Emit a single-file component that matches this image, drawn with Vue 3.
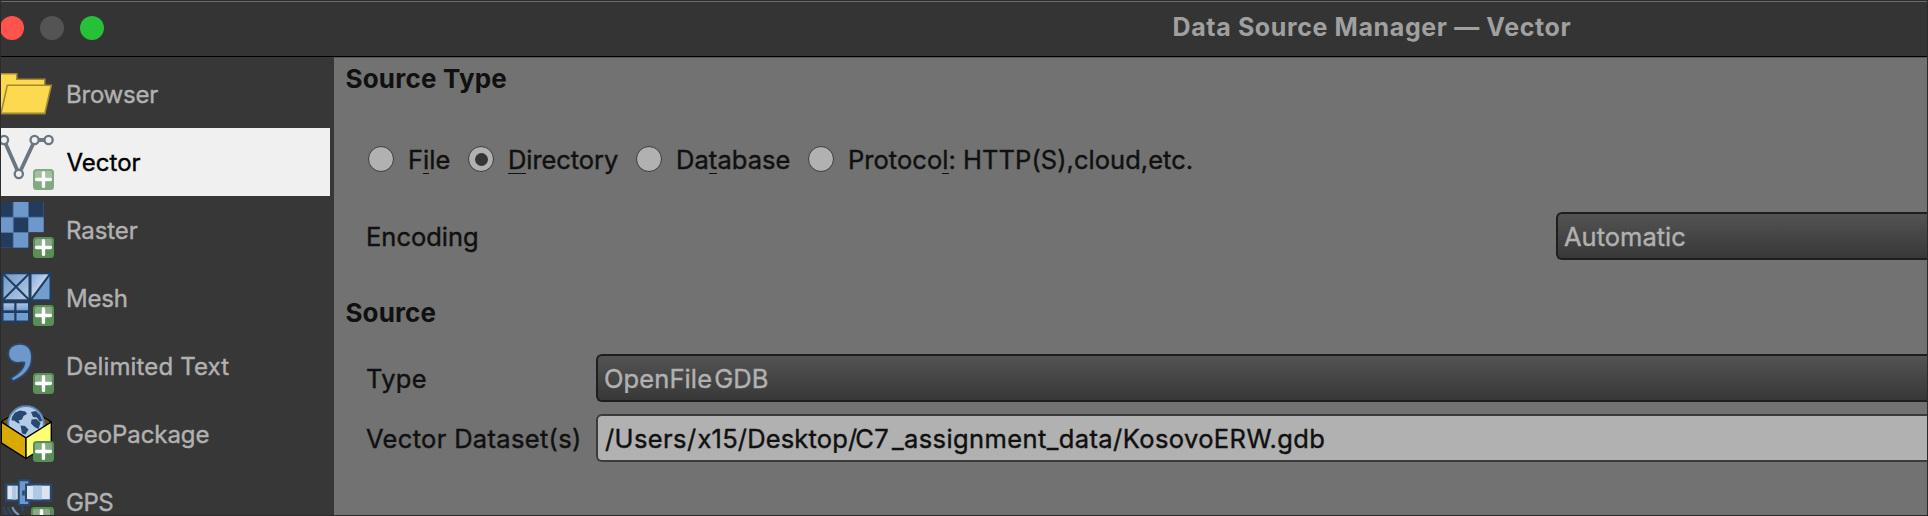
<script setup>
const sources = [
  { id: 'browser', name: 'Browser', ls: -0.23, badge: false, shift: 1 },
  { id: 'vector', name: 'Vector', ls: 0, badge: true, active: true, shift: 1.5 },
  { id: 'raster', name: 'Raster', ls: -0.08, badge: true, shift: 1 },
  { id: 'mesh', name: 'Mesh', ls: -0.21, badge: true, shift: 1 },
  { id: 'text', name: 'Delimited Text', ls: 0.13, badge: true, shift: 1 },
  { id: 'gpkg', name: 'GeoPackage', ls: -0.08, badge: true, shift: 1 },
  { id: 'gps', name: 'GPS', ls: -0.5, badge: true, shift: 1 },
]
</script>

<template>
  <div class="window">
    <header class="titlebar">
      <div class="lights">
        <i class="light close"></i><i class="light minimise"></i><i class="light zoom"></i>
      </div>
      <h1>Data Source Manager — Vector</h1>
    </header>

    <div class="body">
      <nav class="sidebar">
        <div v-for="s in sources" :key="s.id" class="entry" :class="{ active: s.active }">
          <svg class="icon" width="60" height="68" viewBox="0 0 60 68">
            <defs>
              <linearGradient id="meshFill" x1="0" y1="0" x2="1" y2="1">
                <stop offset="0" stop-color="#6b97c9" /><stop offset="1" stop-color="#b9cee8" />
              </linearGradient>
              <linearGradient id="meshCorner" x1="0" y1="0" x2="1" y2="1">
                <stop offset="0" stop-color="#83a9d6" /><stop offset=".5" stop-color="#c3d6ec" />
              </linearGradient>
              <linearGradient id="meshCell" x1="0" y1="0" x2="0" y2="1">
                <stop offset="0" stop-color="#b0c9e8" /><stop offset="1" stop-color="#729dcf" />
              </linearGradient>
            </defs>

            <g v-if="s.id === 'browser'" fill="#fdd94f" stroke="#a08a32" stroke-width="1.6">
              <path d="M-2 13.8H16.8V19.2H44.8V53.5H-2Z" />
              <path d="M7.3 25.2H51.3L44.8 53.4H1Z" />
            </g>

            <g v-else-if="s.id === 'vector'" stroke="#6a7682">
              <path d="M4 12L19 46L35 12H48.5" fill="none" stroke-width="3.8" />
              <g fill="#f0f0f0" stroke-width="2.3">
                <circle cx="4" cy="12" r="4.1" /><circle cx="18.8" cy="46" r="4.1" />
                <circle cx="34.6" cy="12" r="4.1" /><circle cx="48.6" cy="12" r="4.1" />
              </g>
            </g>

            <g v-else-if="s.id === 'raster'">
              <path d="M0 6H43.7V36.3H28.5V51.5H0Z" fill="#4d78a8" />
              <path d="M0 6H12.8V20.8H0ZM28.8 6H43.5V20.8H28.8ZM13.8 21.7H28V36H13.8ZM0 37H12.8V51.4H0Z" fill="#233b5c" />
              <path d="M13.8 6H28V20.8H13.8ZM0 21.7H12.8V36H0ZM28.8 21.7H43.5V36H28.8ZM13.8 37H28V51.4H13.8Z" fill="#6d98c9" />
            </g>

            <g v-else-if="s.id === 'mesh'" stroke="#213d60" stroke-width="2">
              <rect x="2.5" y="9.3" width="27" height="27" fill="url(#meshFill)" />
              <path d="M2.5 9.3L29.5 36.3M29.5 9.3L2.5 36.3" />
              <rect x="30.5" y="9.3" width="20" height="27" fill="url(#meshCorner)" />
              <path d="M50.5 9.3V36.3H30.5Z" fill="#729dcf" />
              <rect x="2.5" y="38.3" width="13" height="9" fill="url(#meshCell)" />
              <rect x="15.5" y="38.3" width="13.5" height="9" fill="url(#meshCell)" />
              <rect x="2.5" y="48" width="13" height="9.5" fill="#729dcf" />
              <rect x="15.5" y="48" width="13.5" height="9.5" fill="#729dcf" />
            </g>

            <path
              v-else-if="s.id === 'text'"
              d="M19.5 11.8C12.5 11.8 8.2 16 8.2 21.8C8.2 27.5 12.5 30.8 17 30.8C19.8 30.8 22.2 29.6 24.5 30.6C24.3 36 18.5 41.5 11 46L12.8 49.3C24 44.5 31.8 37 31.8 25.5C31.8 16.5 27 11.8 19.5 11.8Z"
              fill="#6d98c9" stroke="#28486f" stroke-width="1.7"
            />

            <g v-else-if="s.id === 'gpkg'" stroke-linejoin="round">
              <path d="M1.3 21.8L26 6L51.3 22L26 38Z" fill="#6b5613" stroke="#000" stroke-width="1.3" />
              <circle cx="26" cy="24" r="17.8" fill="#b3cbe7" stroke="#5b86b8" stroke-width="1.8" />
              <path d="M12 17L15 12.5L20 10.5L25.5 11.5L27 14L23.5 16L22 19.5L18.5 20.5L20 23.5L17.5 23L14 20.5L11.5 20.5Z" fill="#28486f" />
              <path d="M20.5 25.5L25 26L28.5 29.5L25.5 34.5L22 33.5Z" fill="#28486f" />
              <path d="M31 12L36 11L40 15L42.5 21L39.5 21.5L37 17.5L33 17Z" fill="#28486f" />
              <path d="M31.5 19.5L36.5 19L40.5 23L38.5 29L34.5 27L31 23.5Z" fill="#28486f" />
              <path d="M1.3 21.8L26 37.8V58.5L1.3 42.8Z" fill="#d8aa00" stroke="#000" stroke-width="1.4" />
              <path d="M26 37.8L51.3 22V42.8L26 58.5Z" fill="#ffff76" stroke="#000" stroke-width="1.4" />
            </g>

            <g v-else stroke="#28486f" stroke-width="2.4">
              <rect x="6.2" y="16.5" width="14" height="16" fill="#dce4ef" />
              <path d="M12 18H16.5V31.5H12Z" fill="#aec8e6" stroke="none" />
              <rect x="25.5" y="16.5" width="25.5" height="16" fill="#dce4ef" />
              <path d="M33 17.7H42V31.3H33Z" fill="#aec8e6" stroke="none" />
              <path d="M18.7 12.2H29.3V16.5H26V32.5H29.3V37H18.7Z" fill="#6d98c9" stroke-width="2" />
              <path d="M23.5 22.5V27.5M22.5 36V43" stroke-width="2.6" />
              <path d="M12.5 39C13.5 43 15.5 45 19 47" fill="none" stroke="#6d98c9" stroke-width="2.2" />
              <path d="M8 39C8.5 43.5 10.5 46 13.5 48M3.8 39C4 43.5 5.5 46.5 8 49" fill="none" stroke-width="1.8" />
            </g>

            <g v-if="s.badge" :class="{ faded: s.active }" :transform="s.id === 'gps' ? 'translate(-2 -2)' : ''">
              <rect x="33" y="41" :width="s.id === 'gps' ? 23 : 21" height="21" rx="3.5" fill="#598f57" />
              <path d="M35 51V44.5Q35 43 36.5 43H50.5Q52 43 52 44.5V51Z" fill="#87ab85" />
              <path d="M43.5 44.6V58.4M36.6 51.5H50.4" stroke="#fff" stroke-width="3.4" stroke-linecap="round" />
            </g>
          </svg>
          <span :style="{ letterSpacing: s.ls + 'px', marginLeft: s.shift + 'px' }">{{ s.name }}</span>
        </div>
      </nav>

      <main class="panel">
        <h2>Source Type</h2>
        <div class="radios">
          <label class="file"><i class="radio"></i><span>F<u>i</u>le</span></label>
          <label class="directory"><i class="radio checked"></i><span><u>D</u>irectory</span></label>
          <label class="database"><i class="radio"></i><span>Da<u>t</u>abase</span></label>
          <label class="protocol"><i class="radio"></i><span>Protoco<u>l</u>: HTTP(S),cloud,etc.</span></label>
        </div>
        <div class="row encoding">
          <span class="name">Encoding</span>
          <div class="combo">Automatic</div>
        </div>

        <h2 class="second">Source</h2>
        <div class="row type">
          <span class="name">Type</span>
          <div class="combo driver">OpenFil<span class="loose">e</span>GDB</div>
        </div>
        <div class="row dataset">
          <span class="name">Vector Dataset(s)</span>
          <div class="field">/Users<span class="gap">/</span><span class="desk">x15/Desktop</span><span class="tight">/</span>C<span class="wide">7</span>_assignment_data/KosovoERW.gdb</div>
        </div>
      </main>
    </div>
    <div class="frame"></div>
  </div>
</template>

<style>
body { margin: 0; overflow: hidden; background: #343434; }
</style>

<style scoped>
.window {
  position: relative;
  display: flex;
  flex-direction: column;
  width: 1928px;
  height: 516px;
  overflow: hidden;
  background: #373737;
  font-family: Inter, "Liberation Sans", sans-serif;
  white-space: nowrap;
}
.frame {
  position: absolute;
  inset: 0;
  border: 1px solid #2b2b2c;
  pointer-events: none;
}
.frame::before { content: ""; display: block; height: 1px; background: #6c6c6c; }
.titlebar {
  box-sizing: border-box;
  display: flex;
  flex: none;
  height: 57px;
  background: #343434;
  border-bottom: 1px solid #000;
}
.lights { display: flex; align-items: center; gap: 16px; width: 1172.5px; height: 56px; }
.light { width: 24px; height: 24px; border-radius: 50%; }
.close { background: #ff544d; }
.minimise { background: #545454; }
.zoom { background: #26c137; }
h1 {
  margin: 0;
  font-size: 25px;
  line-height: 54px;
  font-weight: 700;
  letter-spacing: 0.62px;
  color: #a0a0a0;
}
.body { display: flex; flex: 1; min-height: 0; }
.sidebar { flex: none; width: 334px; padding-top: 3px; }
.entry {
  display: flex;
  align-items: center;
  width: 330px;
  height: 68px;
  font-size: 24px;
  color: #b1b1b1;
  -webkit-text-stroke: 0.4px;
}
.entry.active { background: #f0f0f0; color: #000; }
.icon { flex: none; margin-right: 5px; }
.faded { opacity: 0.72; }

.panel {
  flex: 1;
  box-sizing: border-box;
  min-width: 0;
  background: #727272;
  box-shadow: inset 0 1px #555;
  color: #101010;
  font-size: 25.5px;
}
h2 {
  margin: 0;
  padding-left: 11.5px;
  font-size: 26px;
  line-height: 43px;
  font-weight: 700;
  letter-spacing: 0.2px;
}
.radios, .row { -webkit-text-stroke: 0.4px; }
.radios { display: flex; height: 48px; margin: 35px 0 0 34px; }
label { display: flex; align-items: center; gap: 14px; }
label span { padding-top: 1px; }
.file { width: 100px; }
.directory { width: 168px; letter-spacing: -0.07px; }
.database { width: 172px; letter-spacing: 0.06px; }
.protocol { letter-spacing: 0.04px; }
u {
  text-decoration: none;
  background: linear-gradient(#101010, #101010) 0 calc(100% - 1px) / 100% 1px no-repeat;
}
.radio {
  box-sizing: border-box;
  display: flex;
  width: 26px;
  height: 26px;
  border: 1.5px solid #3c3c3c;
  border-radius: 50%;
  background: #b1b1b1;
}
.checked::after {
  content: "";
  width: 13px;
  height: 13px;
  margin: auto;
  border-radius: 50%;
  background: #353535;
}
.row { display: flex; height: 48px; line-height: 49px; padding-left: 32px; }
.name { flex: none; width: 230px; }
.encoding { margin-top: 29px; }
.encoding .name { width: 1190px; letter-spacing: 0; }
.second { margin-top: 31px; letter-spacing: 0.1px; }
.type { margin-top: 20px; }
.type .name { letter-spacing: 0.3px; }
.dataset { margin-top: 12px; }
.dataset .name { letter-spacing: 0.32px; }
.combo, .field {
  box-sizing: border-box;
  flex: 1;
  height: 48px;
  line-height: 45px;
  padding-left: 6px;
  border: 2px solid #1e1e1e;
  border-right: 0;
  border-radius: 6px 0 0 6px;
}
.combo { background: linear-gradient(#535353, #383838); color: #b1b1b1; }
.driver { letter-spacing: 0.1px; }
.field { padding-left: 7px; background: #b1b1b1; border-color: #3b3b3b; letter-spacing: 0.4px; }
.loose { letter-spacing: 2.2px; }
.gap { letter-spacing: 1.4px; }
.desk { letter-spacing: 0.15px; }
.tight { letter-spacing: -1.8px; }
.wide { letter-spacing: 3.2px; }
</style>
